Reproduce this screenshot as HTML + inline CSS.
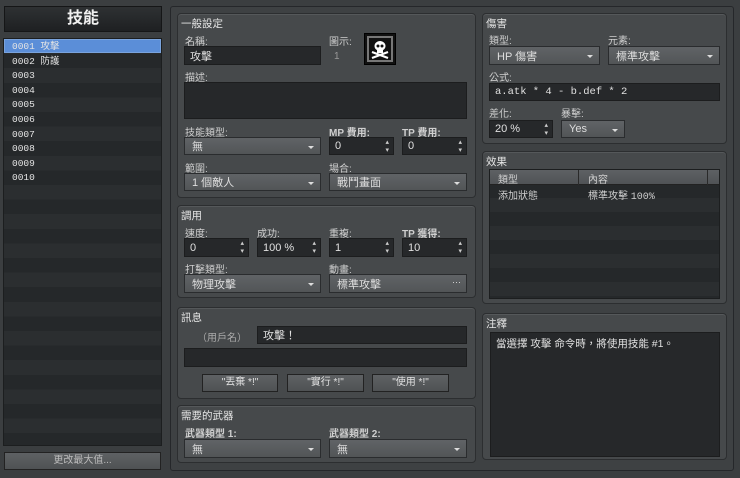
<!DOCTYPE html>
<html><head><meta charset="utf-8"><style>
*{margin:0;padding:0;box-sizing:border-box}
body{width:740px;height:478px;background:#3b3e40;font-family:"Liberation Sans","Noto Sans CJK TC",sans-serif;font-size:10px;color:#d8d8d8;position:relative;overflow:hidden}
.a{position:absolute}
.grp{position:absolute;background:#46494b;border:1px solid #2c2e30;border-radius:4px;box-shadow:inset 0 1px 0 #55585a}
.t{position:absolute;font-size:10.5px;color:#e6e6e6}
.l{position:absolute;font-size:10px;color:#cfcfcf}
.in{position:absolute;background:#26282a;border:1px solid #1c1d1e;color:#e0e0e0;font-size:11px;padding:0 5px;display:flex;align-items:center}
.sel{position:absolute;background:linear-gradient(#606366,#525557);border:1px solid #2a2c2e;color:#dedede;font-size:11px;padding:0 7px;display:flex;align-items:center}
.sel.ar:after{content:"";position:absolute;right:6px;top:8px;border-left:3px solid transparent;border-right:3px solid transparent;border-top:3px solid #ddd}
.sp:after{content:"▴\A▾";white-space:pre;position:absolute;right:4px;top:1px;font-size:7px;line-height:8px;color:#ccc}
.btn{position:absolute;background:linear-gradient(#5e6164,#4f5254);border:1px solid #222;color:#e0e0e0;text-align:center;font-size:10px;line-height:15px}
.mono{font-family:"Liberation Mono","Noto Sans CJK TC",monospace}
</style></head><body>
<div class="a" style="left:4px;top:6px;width:158px;height:26px;background:linear-gradient(#2e3133,#1e2022);border:1px solid #151617;color:#f0f0f0;font-size:16px;text-align:center;line-height:24px;font-weight:bold">技能</div>
<div class="a" style="left:3px;top:38px;width:159px;height:408px;border:1px solid #1c1e1f;background:repeating-linear-gradient(#2b2e30 0 14.6px,#25282a 14.6px 29.2px)"></div>
<div class="a" style="left:4px;top:39px;width:157px;height:14px;background:#5b8ed8;border:1px solid #7aa3dc"></div>
<div class="a mono" style="left:12px;top:40px;font-size:9.5px;line-height:14.6px;color:#e4e4e4">0001 攻擊<br>0002 防護<br>0003<br>0004<br>0005<br>0006<br>0007<br>0008<br>0009<br>0010</div>
<div class="btn" style="left:4px;top:452px;width:157px;height:18px;color:#bbb">更改最大值...</div>
<div class="a" style="left:170px;top:6px;width:564px;height:465px;border:1px solid #25272a;border-radius:3px;background:#3e4143"></div>

<div class="grp" style="left:177px;top:13px;width:299px;height:185px"></div>
<div class="t" style="left:181px;top:16px">一般設定</div>
<div class="l" style="left:185px;top:33px">名稱:</div>
<div class="in" style="left:184px;top:46px;width:137px;height:19px">攻擊</div>
<div class="l" style="left:329px;top:33px">圖示:</div>
<div class="l" style="left:334px;top:51px;color:#999">1</div>
<svg class="a" style="left:364px;top:33px" width="32" height="32" viewBox="0 0 32 32"><rect x="0.5" y="0.5" width="31" height="31" fill="#111" stroke="#000"/><rect x="3" y="3" width="26" height="26" fill="#777"/><rect x="5" y="5" width="22" height="22" fill="#111"/><ellipse cx="16" cy="13" rx="5.5" ry="5" fill="#fff"/><rect x="13" y="16" width="6" height="4" fill="#fff"/><circle cx="14" cy="13" r="1.5" fill="#111"/><circle cx="18" cy="13" r="1.5" fill="#111"/><path d="M8 19 L24 25 M24 19 L8 25" stroke="#fff" stroke-width="2.2"/></svg>
<div class="l" style="left:185px;top:69px">描述:</div>
<div class="in" style="left:184px;top:82px;width:283px;height:37px"></div>
<div class="l" style="left:185px;top:124px">技能類型:</div>
<div class="sel ar" style="left:184px;top:137px;width:137px;height:18px">無</div>
<div class="l" style="left:329px;top:124px;font-weight:bold">MP 費用:</div>
<div class="in sp" style="left:329px;top:137px;width:65px;height:18px">0</div>
<div class="l" style="left:402px;top:124px;font-weight:bold">TP 費用:</div>
<div class="in sp" style="left:402px;top:137px;width:65px;height:18px">0</div>
<div class="l" style="left:185px;top:160px">範圍:</div>
<div class="sel ar" style="left:184px;top:173px;width:137px;height:18px">1 個敵人</div>
<div class="l" style="left:329px;top:160px">場合:</div>
<div class="sel ar" style="left:329px;top:173px;width:138px;height:18px">戰鬥畫面</div>

<div class="grp" style="left:177px;top:205px;width:299px;height:93px"></div>
<div class="t" style="left:181px;top:208px">調用</div>
<div class="l" style="left:185px;top:225px">速度:</div>
<div class="in sp" style="left:184px;top:238px;width:65px;height:19px">0</div>
<div class="l" style="left:257px;top:225px">成功:</div>
<div class="in sp" style="left:257px;top:238px;width:64px;height:19px">100 %</div>
<div class="l" style="left:329px;top:225px">重複:</div>
<div class="in sp" style="left:329px;top:238px;width:65px;height:19px">1</div>
<div class="l" style="left:402px;top:225px;font-weight:bold">TP 獲得:</div>
<div class="in sp" style="left:402px;top:238px;width:65px;height:19px">10</div>
<div class="l" style="left:185px;top:261px">打擊類型:</div>
<div class="sel ar" style="left:184px;top:274px;width:137px;height:19px">物理攻擊</div>
<div class="l" style="left:329px;top:261px">動畫:</div>
<div class="sel" style="left:329px;top:274px;width:138px;height:19px">標準攻擊<span style="position:absolute;right:5px;top:2px;font-size:9px">···</span></div>

<div class="grp" style="left:177px;top:307px;width:299px;height:92px"></div>
<div class="t" style="left:181px;top:310px">訊息</div>
<div class="l" style="left:197px;top:329px;color:#aaa">（用戶名）</div>
<div class="in" style="left:257px;top:326px;width:210px;height:18px">攻擊！</div>
<div class="in" style="left:184px;top:348px;width:283px;height:19px"></div>
<div class="btn" style="left:202px;top:374px;width:76px;height:18px">"丟棄 *!"</div>
<div class="btn" style="left:287px;top:374px;width:77px;height:18px">"實行 *!"</div>
<div class="btn" style="left:372px;top:374px;width:77px;height:18px">"使用 *!"</div>

<div class="grp" style="left:177px;top:405px;width:299px;height:58px"></div>
<div class="t" style="left:181px;top:408px">需要的武器</div>
<div class="l" style="left:185px;top:425px;font-weight:bold">武器類型 1:</div>
<div class="sel ar" style="left:184px;top:439px;width:137px;height:19px">無</div>
<div class="l" style="left:329px;top:425px;font-weight:bold">武器類型 2:</div>
<div class="sel ar" style="left:329px;top:439px;width:138px;height:19px">無</div>

<div class="grp" style="left:482px;top:13px;width:245px;height:131px"></div>
<div class="t" style="left:486px;top:16px">傷害</div>
<div class="l" style="left:489px;top:32px">類型:</div>
<div class="sel ar" style="left:489px;top:46px;width:111px;height:19px">HP 傷害</div>
<div class="l" style="left:608px;top:32px">元素:</div>
<div class="sel ar" style="left:608px;top:46px;width:112px;height:19px">標準攻擊</div>
<div class="l" style="left:489px;top:69px">公式:</div>
<div class="in mono" style="left:489px;top:83px;width:231px;height:18px;font-size:10.5px">a.atk * 4 - b.def * 2</div>
<div class="l" style="left:489px;top:105px">差化:</div>
<div class="in sp" style="left:489px;top:120px;width:64px;height:18px">20 %</div>
<div class="l" style="left:561px;top:105px">暴擊:</div>
<div class="sel ar" style="left:561px;top:120px;width:64px;height:18px">Yes</div>

<div class="grp" style="left:482px;top:151px;width:245px;height:153px"></div>
<div class="t" style="left:486px;top:154px">效果</div>
<div class="a" style="left:489px;top:169px;width:231px;height:130px;border:1px solid #1c1e1f;background:repeating-linear-gradient(#2b2e30 0 14px,#25282a 14px 28px)"></div>
<div class="a" style="left:490px;top:170px;width:229px;height:15px;background:linear-gradient(#5e6164,#505356);border-bottom:1px solid #222"></div>
<div class="a" style="left:578px;top:170px;width:1px;height:15px;background:#2a2a2a"></div>
<div class="a" style="left:707px;top:170px;width:1px;height:15px;background:#2a2a2a"></div>
<div class="l" style="left:498px;top:171px">類型</div>
<div class="l" style="left:588px;top:171px">內容</div>
<div class="l" style="left:498px;top:187px">添加狀態</div>
<div class="l" style="left:588px;top:187px">標準攻擊 <span class="mono">100%</span></div>

<div class="grp" style="left:482px;top:313px;width:245px;height:147px"></div>
<div class="t" style="left:486px;top:316px">注釋</div>
<div class="a" style="left:490px;top:332px;width:230px;height:125px;padding:3px 5px;background:#26282a;border:1px solid #1c1d1e;color:#e0e0e0;font-size:10.5px">當選擇 攻擊 命令時，將使用技能 #1。</div>
</body></html>
